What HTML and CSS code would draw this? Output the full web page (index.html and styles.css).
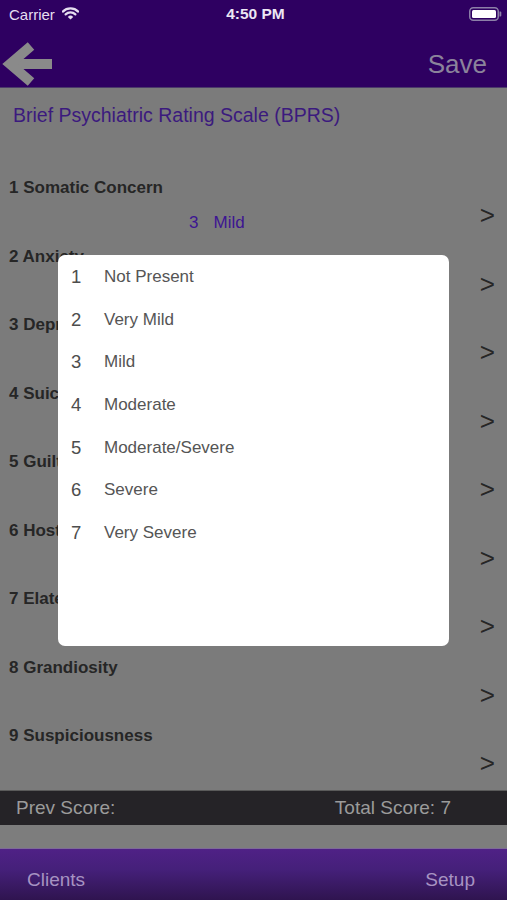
FILE: index.html
```html
<!DOCTYPE html>
<html>
<head>
<meta charset="utf-8">
<link rel="stylesheet" href="styles.css">
</head>
<body>
<div class="screen">
  <header class="top">
    <div class="status">
      <div class="status-left">
        <span class="carrier">Carrier</span>
        <svg class="wifi" width="17" height="13" viewBox="0 0 17 13">
          <path d="M0.8 4.6 A11 11 0 0 1 16.2 4.6" fill="none" stroke="#e6def0" stroke-width="2.2" stroke-linecap="round"/>
          <path d="M3.6 7.4 A7 7 0 0 1 13.4 7.4" fill="none" stroke="#e6def0" stroke-width="2.2" stroke-linecap="round"/>
          <path d="M8.5 12.5 L5.8 9.9 A3.8 3.8 0 0 1 11.2 9.9 Z" fill="#e6def0"/>
        </svg>
      </div>
      <span class="time">4:50 PM</span>
      <div class="status-right">
        <svg class="battery" width="33" height="14" viewBox="0 0 33 14">
          <rect x="0.75" y="0.75" width="28.5" height="12.5" rx="3.5" fill="none" stroke="#8c7fa8" stroke-width="1.5"/>
          <rect x="3" y="3" width="24" height="8" rx="1.5" fill="#ffffff"/>
          <path d="M30.5 4.5 h0.8 a1 1 0 0 1 1 1 v3 a1 1 0 0 1 -1 1 h-0.8 z" fill="#8c7fa8"/>
        </svg>
      </div>
    </div>
    <nav class="navbar">
      <svg class="back" width="56" height="44" viewBox="0 0 56 44">
        <path d="M52 22 H12" stroke="#8a8a8a" stroke-width="10"/>
        <path d="M31 4 L10 22 L31 40" fill="none" stroke="#8a8a8a" stroke-width="10" stroke-linejoin="miter" stroke-miterlimit="10"/>
      </svg>
      <span class="save">Save</span>
    </nav>
  </header>

  <main class="content">
    <h1 class="title">Brief Psychiatric Rating Scale (BPRS)</h1>
    <div class="rows">
      <div class="row">
        <div class="label">1 Somatic Concern</div>
        <div class="line"><span class="value"><span class="vnum">3</span>Mild</span><span class="chev">&gt;</span></div>
      </div>
      <div class="row"><div class="label">2 Anxiety</div><div class="line"><span class="value"></span><span class="chev">&gt;</span></div></div>
      <div class="row"><div class="label">3 Depression</div><div class="line"><span class="value"></span><span class="chev">&gt;</span></div></div>
      <div class="row"><div class="label">4 Suicidality</div><div class="line"><span class="value"></span><span class="chev">&gt;</span></div></div>
      <div class="row"><div class="label">5 Guilt</div><div class="line"><span class="value"></span><span class="chev">&gt;</span></div></div>
      <div class="row"><div class="label">6 Hostility</div><div class="line"><span class="value"></span><span class="chev">&gt;</span></div></div>
      <div class="row"><div class="label">7 Elated Mood</div><div class="line"><span class="value"></span><span class="chev">&gt;</span></div></div>
      <div class="row"><div class="label">8 Grandiosity</div><div class="line"><span class="value"></span><span class="chev">&gt;</span></div></div>
      <div class="row"><div class="label">9 Suspiciousness</div><div class="line"><span class="value"></span><span class="chev">&gt;</span></div></div>
    </div>
  </main>

  <div class="scorebar">
    <span>Prev Score:</span>
    <span class="total">Total Score: 7</span>
  </div>
  <div class="gap"></div>
  <footer class="tabbar">
    <span>Clients</span>
    <span>Setup</span>
  </footer>

  <div class="popup">
    <div class="opt"><span class="num">1</span><span>Not Present</span></div>
    <div class="opt"><span class="num">2</span><span>Very Mild</span></div>
    <div class="opt"><span class="num">3</span><span>Mild</span></div>
    <div class="opt"><span class="num">4</span><span>Moderate</span></div>
    <div class="opt"><span class="num">5</span><span>Moderate/Severe</span></div>
    <div class="opt"><span class="num">6</span><span>Severe</span></div>
    <div class="opt"><span class="num">7</span><span>Very Severe</span></div>
  </div>
</div>
</body>
</html>
```

FILE: styles.css
```css
* { box-sizing: border-box; }
html, body {
  margin: 0;
  padding: 0;
  background: #7b7b7b;
}
body {
  font-family: "Liberation Sans", Arial, sans-serif;
}
.screen {
  position: relative;
  width: 507px;
  height: 900px;
  display: flex;
  flex-direction: column;
  overflow: hidden;
  background: #7b7b7b;
}
.top {
  background: #2e0061;
  border-bottom: 1px solid #4b3a6a;
  height: 88px;
  flex: none;
}
.status {
  height: 28px;
  display: flex;
  align-items: center;
  justify-content: space-between;
  padding: 0 5px 0 9px;
  color: #e6def0;
  position: relative;
}
.status-left {
  display: flex;
  align-items: center;
  gap: 7px;
  width: 120px;
}
.carrier {
  font-size: 15px;
}
.wifi { margin-top: -1px; }
.time {
  font-size: 15.5px;
  font-weight: bold;
  color: #ece6f4;
}
.status-right {
  width: 120px;
  display: flex;
  justify-content: flex-end;
}
.navbar {
  height: 59px;
  display: flex;
  align-items: center;
  justify-content: space-between;
  padding: 0 20px 0 0;
}
.back {
  display: block;
  margin-left: 0;
  margin-top: 12px;
}
.save {
  font-size: 26px;
  color: #8b839b;
  margin-top: 13px;
}
.content {
  flex: 1;
  background: #7b7b7b;
}
.title {
  margin: 0;
  padding: 15px 0 0 13px;
  height: 84px;
  font-size: 19.5px;
  line-height: 24px;
  font-weight: normal;
  color: #3b1a7e;
}
.row {
  height: 68.5px;
  padding: 0 12px 0 9px;
}
.label {
  height: 31px;
  line-height: 31px;
  font-size: 17px;
  font-weight: bold;
  color: #262626;
  white-space: nowrap;
}
.line {
  display: flex;
  justify-content: space-between;
  align-items: flex-start;
}
.value {
  margin-top: 10px;
  margin-left: 180px;
  font-size: 17px;
  line-height: 20px;
  color: #3d1592;
}
.vnum {
  margin-right: 15px;
}
.chev {
  font-size: 26px;
  line-height: 26px;
  color: #262626;
  margin-top: -1px;
}
.scorebar {
  flex: none;
  height: 35px;
  background: #252327;
  border-top: 1px solid #5a5a5a;
  display: flex;
  align-items: center;
  padding: 0 0 0 16px;
  font-size: 19px;
  color: #9b9b9b;
}
.total {
  margin-left: auto;
  margin-right: 56px;
}
.gap {
  flex: none;
  height: 23px;
  background: #7d7d7d;
}
.tabbar {
  flex: none;
  height: 52px;
  background: linear-gradient(#4f2186 0%, #45207a 40%, #2f144f 100%);
  border-top: 1px solid #7e6a98;
  display: flex;
  align-items: center;
  justify-content: space-between;
  padding: 10px 32px 0 27px;
  font-size: 19px;
  color: #a793c2;
}
.popup {
  position: absolute;
  left: 58px;
  top: 255px;
  width: 391px;
  height: 391px;
  background: #ffffff;
  border-radius: 7px;
}
.opt {
  height: 42.7px;
  display: flex;
  align-items: center;
  padding-left: 13px;
  font-size: 17px;
  color: #555555;
  padding-top: 1px;
}
.num {
  width: 33px;
  font-size: 18.5px;
  color: #4d4d4d;
}
```
